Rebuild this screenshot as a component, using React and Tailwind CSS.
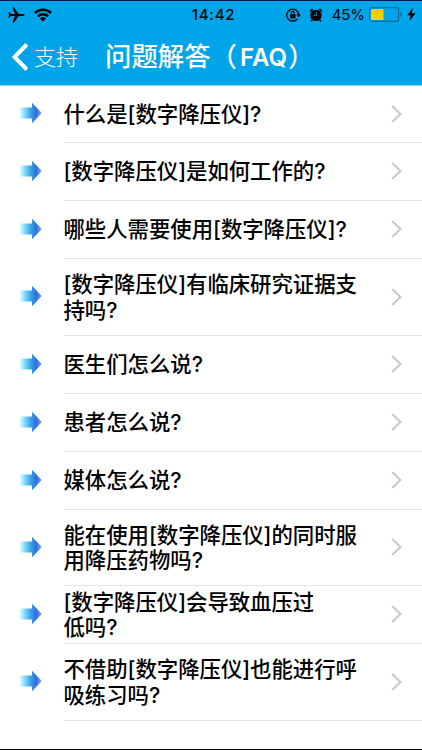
import React from 'react';

const ROWS = [
  { lines: ['什么是[数字降压仪]?'], h: 'h-[57px]' },
  { lines: ['[数字降压仪]是如何工作的?'], h: 'h-[58px]' },
  { lines: ['哪些人需要使用[数字降压仪]?'], h: 'h-[58px]' },
  { lines: ['[数字降压仪]有临床研究证据支', '持吗?'], h: 'h-[77px]' },
  { lines: ['医生们怎么说?'], h: 'h-[58px]' },
  { lines: ['患者怎么说?'], h: 'h-[58px]' },
  { lines: ['媒体怎么说?'], h: 'h-[58px]' },
  { lines: ['能在使用[数字降压仪]的同时服', '用降压药物吗?'], h: 'h-[76px]' },
  { lines: ['[数字降压仪]会导致血压过', '低吗?'], h: 'h-[58px]' },
  { lines: ['不借助[数字降压仪]也能进行呼', '吸练习吗?'], h: 'h-[77px]' },
];

function ArrowDefs() {
  return (
    <svg width="0" height="0" className="absolute">
      <defs>
        <linearGradient id="arrow" x1="0" x2="1" y1="0" y2="0">
          <stop offset="0" stopColor="#b5f0fd" stopOpacity="0.5" />
          <stop offset="0.22" stopColor="#7fdcf8" />
          <stop offset="0.5" stopColor="#3a9fe8" />
          <stop offset="0.75" stopColor="#2f6fdc" />
          <stop offset="1" stopColor="#8aa4ee" />
        </linearGradient>
      </defs>
    </svg>
  );
}

function Arrow() {
  return (
    <svg width="22" height="22" viewBox="0 0 22 22" className="mb-[3px] shrink-0">
      <path d="M0 5.600H12V.8L21.800 11 12 21.200V16.400H0Z" fill="url(#arrow)" />
    </svg>
  );
}

function StatusBar() {
  return (
    <div className="flex h-[28px] items-center border-t border-[#071c4a] pl-2 pr-[6px] text-black">
      <div className="flex flex-1 items-center gap-[9px]">
        <svg width="17" height="16" viewBox="0 0 17 16">
          <path d="M16.600 8c0-.6-.9-1-2-1h-3.900L6 .6H4.500L6.900 7H3L1.500 5.300H.3l.8 2.700-.8 2.700h1.200L3 9h3.900l-2.400 6.400H6L10.700 9h3.900c1.100 0 2-.4 2-1z" />
        </svg>
        <svg width="18" height="14" viewBox="0 0 18 14" fill="none" stroke="black" strokeWidth="2.500">
          <path d="M.9 5a11.500 11.500 0 0 1 16.200 0" />
          <path d="M3.900 8.400a7.300 7.300 0 0 1 10.200 0" />
          <path d="M9 13.600 5.900 10.500a4.500 4.500 0 0 1 6.200 0z" fill="black" stroke="none" />
        </svg>
      </div>
      <div className="ml-[3px] pt-[1px] text-[15px] font-medium tracking-[0.8px]">14:42</div>
      <div className="flex flex-1 items-center justify-end">
        <svg width="16" height="14" viewBox="0 0 16 14" fill="none" stroke="black" strokeWidth="1.300">
          <path d="M11.500 10.800A6 6 0 1 1 12.700 6.500" />
          <path d="M10.300 6.300h4.600l-2.300 3.200z" fill="black" stroke="none" />
          <rect x="4.100" y="6.200" width="5.400" height="4.200" fill="black" stroke="none" />
          <path d="M5.300 6.200V4.900a1.500 1.500 0 0 1 3 0v1.300" strokeWidth="1.100" />
        </svg>
        <svg width="14" height="14" viewBox="0 0 14 14" className="ml-[7px]">
          <circle cx="7" cy="7.400" r="5.700" />
          <path d="M1.100 3.500 3.600 1.200M12.900 3.500 10.400 1.200M3 12l-1 1.300M11 12l1 1.300" stroke="black" strokeWidth="1.600" />
          <path d="M7.300 4.200v3.500H4.600" stroke="#00a5e9" strokeWidth="1" fill="none" />
        </svg>
        <span className="ml-[9px] pt-[1px] text-[15px] tracking-[-0.1px]">45%</span>
        <svg width="34" height="15" viewBox="0 0 34 15" className="ml-[4px]">
          <rect x=".6" y=".6" width="29" height="13.800" rx="2.300" fill="none" stroke="#086d9b" strokeWidth="1.200" />
          <rect x="2" y="2" width="12.500" height="11" rx="1" fill="#ffcc00" />
          <path d="M31.500 5v5q1.700-.7 1.700-2.500T31.500 5z" fill="#086d9b" />
        </svg>
        <svg width="9" height="13" viewBox="0 0 9 13" className="ml-[4px]">
          <path d="M5.600 0 .3 7.200h3.300L2.500 13 8.700 5.300H5.200z" />
        </svg>
      </div>
    </div>
  );
}

export default function App() {
  return (
    <div className="flex h-[750px] w-[422px] flex-col overflow-hidden border-b border-black bg-white font-[Inter,'Noto_Sans_CJK_SC',sans-serif]">
      <ArrowDefs />
      <header className="h-[86px] shrink-0 border-b border-[#8cdcfb] bg-[#00a5e9]">
        <StatusBar />
        <div className="flex h-[57px] items-center pl-3 text-white">
          <svg width="17" height="28" viewBox="0 0 17 28" fill="none" stroke="white" strokeWidth="4">
            <path d="M14.800 1.500 2.500 14l12.300 12.500" />
          </svg>
          <span className="ml-[5px] w-[71px] text-[22px] font-light leading-none">支持</span>
          <h1 className="whitespace-nowrap text-[26.4px] font-medium leading-none">
            问题解答（<span className="ml-[3px] text-[24px] font-semibold">FAQ</span>
            <span className="ml-[1px]">）</span>
          </h1>
        </div>
      </header>
      <main className="flex flex-col">
        {ROWS.map((row) => (
          <div key={row.lines[0]} className={`flex shrink-0 items-center pl-5 ${row.h}`}>
            <Arrow />
            <div className="ml-[22px] flex h-full flex-1 items-center justify-between border-b border-[#e4e4e6] pr-[20px]">
              <div className="-ml-[0.5px] whitespace-nowrap pt-[1px] text-[21.4px] font-medium leading-[25.500px] tracking-[-0.03px] text-black">
                {row.lines.map((line) => (
                  <div key={line}>{line}</div>
                ))}
              </div>
              <svg width="11" height="18" viewBox="0 0 11 18" fill="none" stroke="#c7c7cc" strokeWidth="2" className="mb-[1px]">
                <path d="M1.200 1 9.500 9 1.200 17" />
              </svg>
            </div>
          </div>
        ))}
      </main>
    </div>
  );
}
